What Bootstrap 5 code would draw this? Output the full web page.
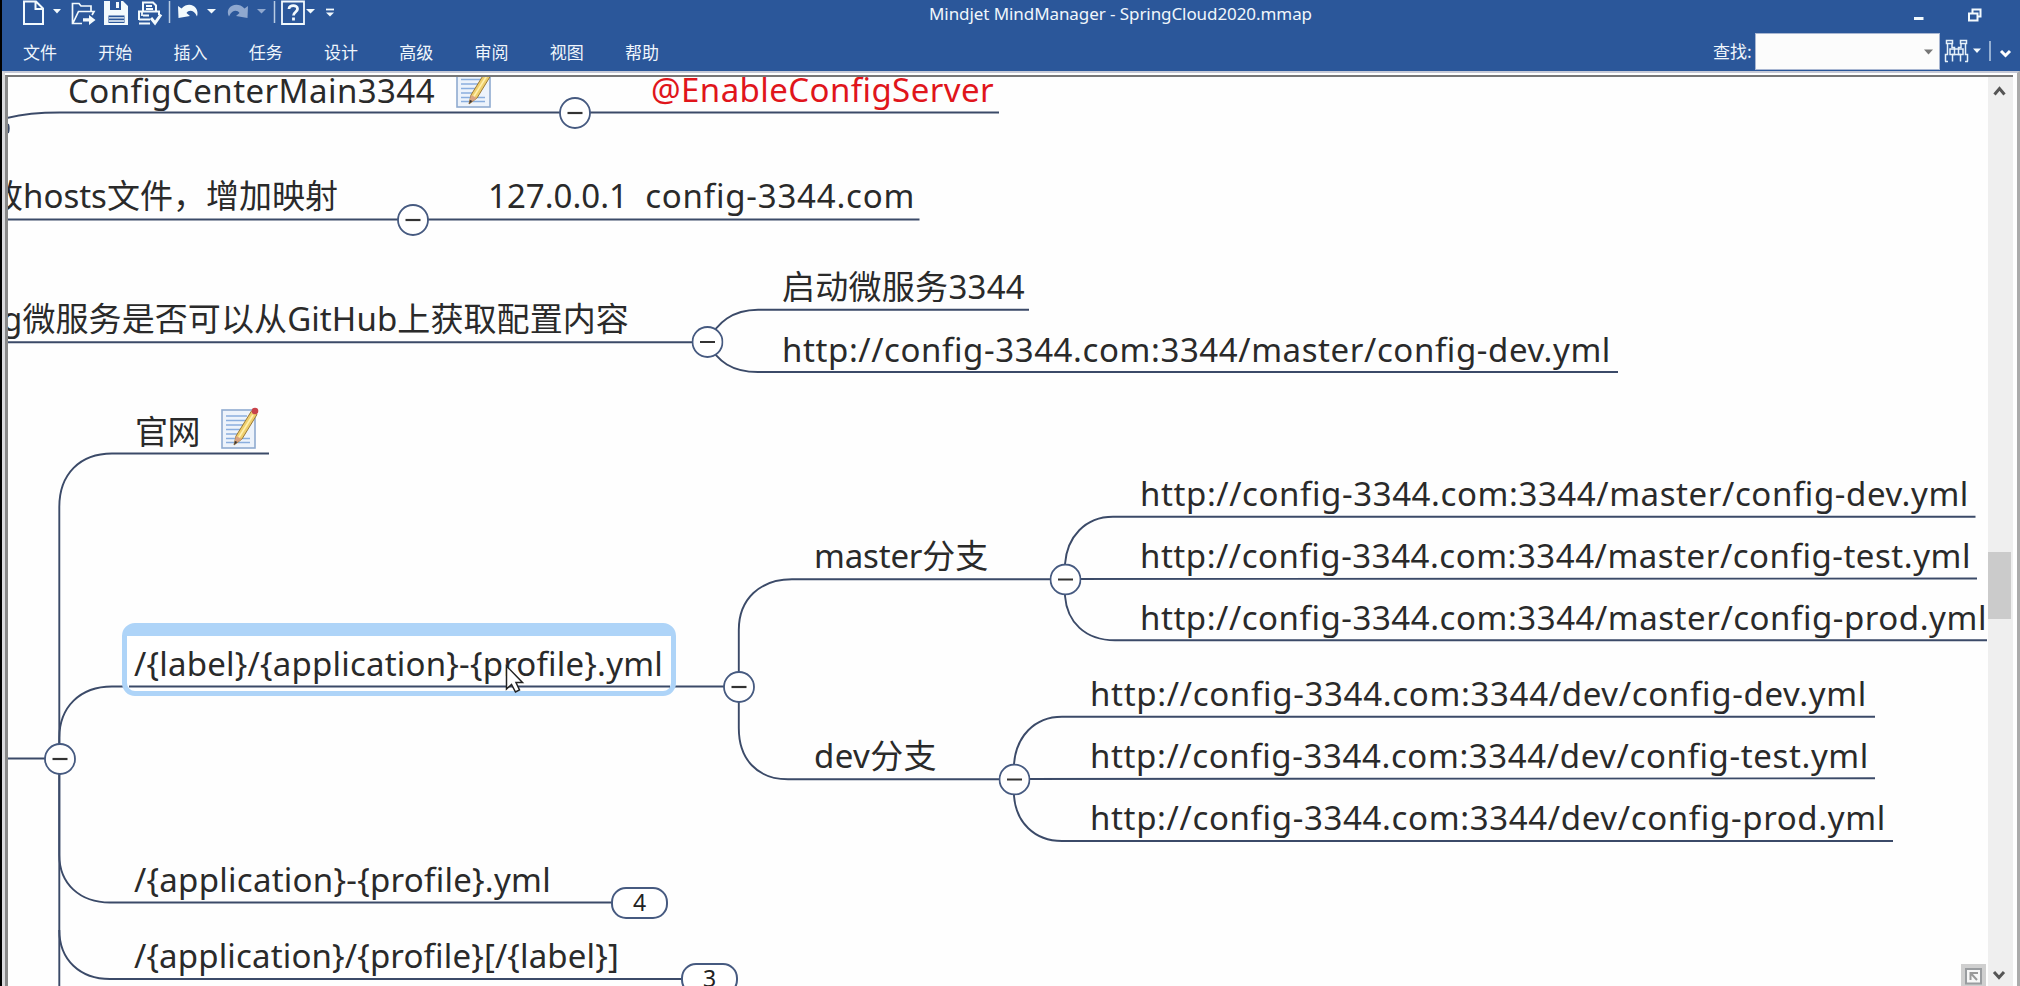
<!DOCTYPE html>
<html lang="zh-CN">
<head>
<meta charset="utf-8">
<title>Mindjet MindManager - SpringCloud2020.mmap</title>
<link href="https://cdn.jsdelivr.net/npm/bootstrap@5.3.0/dist/css/bootstrap.min.css" rel="stylesheet">
<style>
  html, body { height: 100%; overflow: hidden; }
  body { background: #000; font-family: "Noto Sans", "Noto Sans CJK SC", sans-serif; }
  .app-shell { height: 986px; padding-left: 2px; }
  .app-head { background: #2b579a; height: 71px; color: #f0f6fc; flex: none; }
  .title-row { height: 31px; }
  .title-row svg, .find-row svg { display: block; flex: none; }
  .app-title { left: 927px; top: 1px; font-size: 17px; line-height: 26px; white-space: nowrap; }
  .menu-row { height: 40px; padding-left: 21px; }
  .menu-tab { width: 75.25px; padding: 0; color: #f0f6fc; font-size: 17px; line-height: 42px; white-space: nowrap; font-family: "Noto Sans CJK SC", sans-serif; }
  .find-label { font-size: 17px; line-height: 40px; width: 42px; white-space: nowrap; font-family: "Noto Sans CJK SC", sans-serif; }
  .find-box { width: 185px; height: 37px; margin-top: 2px; background: #fcfcfc; border: 1px solid #a9b7d2; }
  .frame { background: #fff; border-top: 2px solid #c6c9d6; border-left: 3px solid #d9d9dc; border-right: 3px solid #ababab; padding: 2px 4px 0 0; min-height: 0; }
  .frame-in { border-top: 2px solid #777; border-left: 3px solid #888; }
  .map-pane { min-width: 0; background: #fefefe; }
  .map-layer { position: absolute; left: -8px; top: -77px; width: 2020px; height: 986px; }
  .map-layer svg { display: block; }
  .topic { position: absolute; left: var(--x); top: calc(var(--b) - 35px); font-size: 33px; line-height: 48px; white-space: pre; color: #2a2a2a; }
  .topic.hot { color: #e0151b; }
  .count { position: absolute; width: 57px; height: 32px; border: 2px solid #465a80; border-radius: 15px; background: #fff; font-size: 23px; line-height: 27px; text-align: center; color: #222; }
  .count-a { left: 611px; top: 887px; }
  .count-b { left: 681px; top: 963px; }
  .picked { position: absolute; left: 122px; top: 623px; width: 554px; height: 73px; border: solid #aed4f8; border-width: 13px 5px 5px; border-radius: 13px; background: #fff; }
  .pointer { position: absolute; left: 505px; top: 664px; }
  .corner-btn { position: absolute; left: 1961px; top: 964px; }
  .scroll-col { width: 25px; background: #efefef; }
  .scroll-top { height: 475px; padding: 8px 0 0 5px; }
  .scroll-thumb { height: 67px; width: 23px; background: #cbcbcb; }
  .scroll-col svg { display: block; }
</style>
</head>
<body>
<svg width="0" height="0" class="position-absolute">
  <defs>
    <symbol id="fold" viewBox="-16 -16 32 32"><circle r="15" fill="#fff" stroke="#465a80" stroke-width="1.8"/><path d="M-7.5 0H7.5" stroke="#333" stroke-width="2.2"/></symbol>
    <symbol id="memo" viewBox="0 0 38 42">
      <rect x="1" y="3" width="33" height="38" fill="#edf3fb" stroke="#8fabd0" stroke-width="1.6"/>
      <path d="M5 9H26M5 13.5H26M5 18H24M5 22.5H22M5 27H20M5 31.5H29M5 35.500H29" stroke="#8aaede" stroke-width="1.7"/>
      <path d="M13 38L15 29L30.500 4L36 7.500L21 32Z" fill="#efcf6d" stroke="#9a7836" stroke-width="1"/>
      <path d="M17.500 31L32 8" stroke="#fff0ae" stroke-width="1.6"/>
      <path d="M13 38L15 29L21 32Z" fill="#d9a383" stroke="none"/><path d="M13 38L14 34L16.500 35Z" fill="#333" stroke="none"/>
      <circle cx="34" cy="4" r="3.300" fill="#c9434a" stroke="none"/>
    </symbol>
  </defs>
</svg>

<div class="app-shell d-flex flex-column">
  <header class="app-head position-relative">
    <div class="title-row d-flex">
      <svg width="340" height="31" viewBox="2 0 340 31" fill="none" stroke="#f3fafd" stroke-width="2">
        <path d="M24 1.500H36L43 8.500V24H24ZM35.500 1.500V9H43"/>
        <path d="M53 9H61L57 13.500Z" fill="#f3fafd" stroke="none"/>
        <path d="M82 23.500H72.500V3.500H79L81 6H91V11M73 23L78.500 11.500H94L92 15" stroke-width="1.700"/>
        <path d="M83 18.200H89V15L95.500 20L89 25V21.500H83Z" fill="#f3fafd" stroke="none"/>
        <path fill-rule="evenodd" d="M104 1H123L128 6V25H104ZM110 1V10H121V1ZM108.500 15.500V23H124.500V15.500Z" fill="#f3fafd" stroke="none"/>
        <path d="M117.500 2V8" stroke-width="3"/><path d="M109 17.800H124M109 21H124" stroke-width="1.300"/>
        <path d="M143 11V2.500H153L156 5.500V11M146 6H152M146 9H153M139 20V11.500H159V15M143 15.500H149M139 23.500H150" stroke-width="2"/>
        <path d="M139 19.500H150M142 11V16" stroke-width="1.800"/>
        <path d="M151 18L155 23L161 14.500" stroke-width="3"/>
        <path d="M169.500 1V23M274.500 1V23" stroke="#b8cce4" stroke-width="1.500"/>
        <path d="M178 6L178.500 18L190 16L186.500 13C189 9.500 194 10 197 16.500C200 8 190 0 181.500 8.500Z" fill="#f3fafd" stroke="none"/>
        <path d="M207 9H216L211.500 13.500Z" fill="#f3fafd" stroke="none"/>
        <path d="M248 6L247.500 18L236 16L239.500 13C237 9.500 232 10 229 16.500C224 8 236 0 244.500 8.500Z" fill="#8fa8cf" stroke="none"/>
        <path d="M257 9H266L261.500 13.500Z" fill="#8fa8cf" stroke="none"/>
        <path d="M282 1.500H304V24H282Z" stroke-width="1.800"/>
        <path d="M289 9C289 4.500 297.500 4.500 297.500 9C297.500 12 293.500 12 293.500 15.500M293.500 17.500V20.500" stroke-width="2.800"/>
        <path d="M306 9H315L310.500 13.500ZM326 12.500H334L330 16.500Z" fill="#f3fafd" stroke="none"/><path d="M326 9.500H334" stroke-width="1.800"/>
      </svg>
      <svg class="ms-auto" width="120" height="31" viewBox="1900 0 120 31" fill="none" stroke="#f3fafd" stroke-width="2">
        <path d="M1914 18.500H1923.500" stroke-width="3"/>
        <path d="M1969 13.500H1977.500V20.500H1969ZM1972.500 13V9.500H1980.500V16.500H1978"/>
      </svg>
    </div>
    <div class="app-title position-absolute" data-w="383">Mindjet MindManager - SpringCloud2020.mmap</div>
    <div class="menu-row d-flex">
      <nav class="nav flex-nowrap">
        <a class="nav-link menu-tab">文件</a><a class="nav-link menu-tab">开始</a><a class="nav-link menu-tab">插入</a><a class="nav-link menu-tab">任务</a><a class="nav-link menu-tab">设计</a><a class="nav-link menu-tab">高级</a><a class="nav-link menu-tab">审阅</a><a class="nav-link menu-tab">视图</a><a class="nav-link menu-tab">帮助</a>
      </nav>
      <div class="find-row d-flex ms-auto">
        <span class="find-label">查找:</span>
        <div class="find-box d-flex align-items-center justify-content-end pe-1">
          <svg width="13" height="8"><path d="M2 1.500H11L6.500 6.500Z" fill="#777"/></svg>
        </div>
        <svg width="80" height="38" viewBox="1940 31 80 38" fill="none" stroke="#e6f1fa" stroke-width="1.500">
          <path d="M1946.500 40.500H1952.500V43.500H1946.500ZM1960.500 40.500H1966.500V43.500H1960.500Z"/>
          <path d="M1947.500 44V54.500H1945.500V61.500M1952 44V47.500H1954.500V54.500H1952.500V61.500M1965.500 44V54.500H1967.500V61.500M1961 44V47.500H1958.500V54.500H1960.500V61.500"/>
          <path d="M1950 49V54.500H1963V49ZM1945 61.500H1948M1965 61.500H1968"/>
          <path d="M1973 48.500H1981L1977 53Z" fill="#f3fafd" stroke="none"/>
          <path d="M1990 41V61" stroke="#b8cce4"/><path d="M2001 51L2005.500 55.500L2010 51" stroke="#fff" stroke-width="3"/>
        </svg>
      </div>
    </div>
  </header>

  <main class="frame flex-grow-1 d-flex">
    <div class="frame-in d-flex flex-grow-1 overflow-hidden">
      <section class="map-pane flex-grow-1 position-relative overflow-hidden">
        <div class="map-layer">
          <svg width="2020" height="986" fill="none" stroke="#3b4a68" stroke-width="1.900">
            <path d="M0 120Q22 112.500 60 112.500H999"/>
            <path d="M0 219.500H919.500"/>
            <path d="M0 342.300H707M707 342C718 322 732 310 758 309.700H1029M707 342C718 362 732 372 758 372H1618"/>
            <path d="M0 758.500H60M59.300 986V507C59.300 474 80 453.500 112 453.500H269"/>
            <path d="M59.300 758V738C59.300 707 80 686.500 112 686.500H739"/>
            <path d="M59.300 758V855C59.300 884 80 902.500 110 902.500H611M59.300 930C59.300 960 80 979 110 979H681"/>
            <path d="M738.800 686V630C738.800 599 760 579.300 792 579.300H1065M738.800 686V728C738.800 759 757 779.300 788 779.300H1014"/>
            <path d="M1065 579V564C1067 537 1085 516.700 1113 516.700H1975.500M1065 579L1977 578.500M1065 579V596C1067 622 1085 640.300 1115 640.300H1987"/>
            <path d="M1014 779V764C1016 737 1034 716.700 1062 716.700H1875M1014 779L1875 778.300M1014 779V796C1016 822 1034 841 1062 841H1893"/>
            <use href="#fold" x="559" y="97" width="32" height="32"/>
            <use href="#fold" x="397" y="204" width="32" height="32"/>
            <use href="#fold" x="691.500" y="326" width="32" height="32"/>
            <use href="#fold" x="44" y="743" width="32" height="32"/>
            <use href="#fold" x="723" y="671" width="32" height="32"/>
            <use href="#fold" x="1049.500" y="563.500" width="32" height="32"/>
            <use href="#fold" x="998.500" y="763.500" width="32" height="32"/>
            <path d="M8 124Q9.500 128 8 133"/>
            <use href="#memo" x="456" y="66" width="38" height="42"/>
            <use href="#memo" x="221" y="407" width="38" height="42"/>
          </svg>
          <div class="picked"></div>
          <svg class="position-absolute top-0 start-0" width="700" height="700"><path d="M129 686.500H670" stroke="#3b4a68" stroke-width="1.900"/></svg>

          <div class="topic" style="--x:68px;--b:102px" data-w="367">ConfigCenterMain3344</div>
          <div class="topic hot" style="--x:651px;--b:101px" data-w="343">@EnableConfigServer</div>
          <div class="topic" style="--x:-10px;--b:207px" data-w="348">改hosts文件，增加映射</div>
          <div class="topic" style="--x:488px;--b:207px"><span data-w="140">127.0.0.1</span>  <span data-w="270">config-3344.com</span></div>
          <div class="topic" style="--x:2px;--b:330px" data-w="627">g微服务是否可以从GitHub上获取配置内容</div>
          <div class="topic" style="--x:782px;--b:298px" data-w="243">启动微服务3344</div>
          <div class="topic" style="--x:782px;--b:361px" data-w="829">http://config-3344.com:3344/master/config-dev.yml</div>
          <div class="topic" style="--x:135px;--b:443px" data-w="65">官网</div>
          <div class="topic" style="--x:134px;--b:675px" data-w="529">/{label}/{application}-{profile}.yml</div>
          <div class="topic" style="--x:134px;--b:891px" data-w="417">/{application}-{profile}.yml</div>
          <div class="topic" style="--x:134px;--b:967px" data-w="485">/{application}/{profile}[/{label}]</div>
          <div class="topic" style="--x:814px;--b:567px" data-w="174">master分支</div>
          <div class="topic" style="--x:814px;--b:767px" data-w="123">dev分支</div>
          <div class="topic" style="--x:1140px;--b:505px" data-w="829">http://config-3344.com:3344/master/config-dev.yml</div>
          <div class="topic" style="--x:1140px;--b:567px" data-w="831">http://config-3344.com:3344/master/config-test.yml</div>
          <div class="topic" style="--x:1140px;--b:629px" data-w="847">http://config-3344.com:3344/master/config-prod.yml</div>
          <div class="topic" style="--x:1090px;--b:705px" data-w="777">http://config-3344.com:3344/dev/config-dev.yml</div>
          <div class="topic" style="--x:1090px;--b:767px" data-w="779">http://config-3344.com:3344/dev/config-test.yml</div>
          <div class="topic" style="--x:1090px;--b:829px" data-w="796">http://config-3344.com:3344/dev/config-prod.yml</div>
          <div class="count count-a">4</div>
          <div class="count count-b">3</div>

          <svg class="pointer" width="20" height="30"><path d="M1.500 2V25L6.500 20.500L10.500 28L14.500 26L11 18.500H17.500Z" fill="#fff" stroke="#222" stroke-width="1.500"/></svg>
          <svg class="corner-btn" width="26" height="22"><path d="M0 0H25V22H0Z" fill="#cfcfcf"/><path d="M5 5H20V19.500H5Z" fill="#f7f7f7" stroke="#9a9da0" stroke-width="2"/><path d="M9.500 16V9H17M10 9.500L16 16" fill="none" stroke="#999" stroke-width="2"/></svg>
        </div>
      </section>
      <aside class="scroll-col d-flex flex-column flex-shrink-0">
        <div class="scroll-top"><svg width="14" height="12"><path d="M1.500 9.500L6.500 3.500L11.500 9.500" fill="none" stroke="#555" stroke-width="3"/></svg></div>
        <div class="scroll-thumb"></div>
        <div class="mt-auto ps-1 pb-1"><svg width="14" height="12"><path d="M2 2L7 7.500L12 2" fill="none" stroke="#555" stroke-width="3"/></svg></div>
      </aside>
    </div>
  </main>
</div>
<script src="https://cdn.jsdelivr.net/npm/bootstrap@5.3.0/dist/js/bootstrap.bundle.min.js"></script>
<script>
  document.querySelectorAll('[data-w]').forEach(function (el) {
    var n = el.textContent.length;
    el.style.letterSpacing = '0.001px';
    el.style.letterSpacing = ((el.dataset.w - el.getBoundingClientRect().width) / n).toFixed(3) + 'px';
  });
</script>
</body>
</html>
